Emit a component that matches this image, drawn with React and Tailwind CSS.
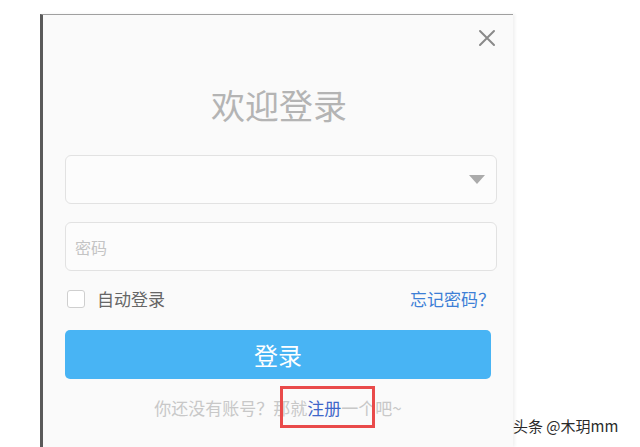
const font = { fontFamily: '"Noto Sans CJK SC", "Noto Sans", sans-serif' };

function CloseIcon() {
	return (
		<svg width="18" height="18" viewBox="0 0 18 18" fill="none" stroke="#8a8a8a" strokeWidth="2" strokeLinecap="round">
			<path d="M2 2 L16 16 M16 2 L2 16" />
		</svg>
	);
}

// full-width question mark, kept at a full em like the reference
function Q() {
	return <span className="inline-block w-[1em] text-center">？</span>;
}

export default function App() {
	return (
		<div className="relative h-[447px] w-[640px] overflow-hidden bg-white" style={font}>
			<div className="ml-[40px] mt-[14px] flex h-[433px] w-[473px] flex-col border-t border-l-[3px] border-t-[#a0a0a0] border-l-[#5a5a5a] bg-[#fafafa] shadow-[2px_0_3px_rgba(0,0,0,0.06)]">
				<div className="flex justify-end pt-[14px] pr-[17px]">
					<button className="h-[18px] w-[18px]">
						<CloseIcon />
					</button>
				</div>

				<div className="pl-[22px] pr-[16px]">
					<h1 className="mt-[38px] text-center text-[34px] leading-[40px] text-[#b4b4b4] pr-[4px]">欢迎登录</h1>

					<div className="mt-[30px] flex h-[49px] items-center justify-end rounded-[6px] border border-[#e2e2e2] bg-[#fcfcfc] pr-[11px]">
						<svg width="16" height="9" viewBox="0 0 16 9">
							<path d="M0 0 H16 L8 9 Z" fill="#ababab" />
						</svg>
					</div>

					<div className="mt-[18px] flex h-[49px] items-center rounded-[6px] border border-[#e2e2e2] bg-[#fcfcfc] pl-[9px]">
						<span className="text-[16px] text-[#c4c4c4]">密码</span>
					</div>

					<div className="mt-[16px] flex h-[24px] items-center justify-between pl-[2px] pr-[2px]">
						<label className="flex items-center gap-[12px] text-[17px] text-[#666]">
							<span className="h-[18px] w-[18px] rounded-[3px] border border-[#cfcfcf] bg-white" />
							自动登录
						</label>
						<a className="text-[17px] text-[#3d7fd6]">
							忘记密码
							<Q />
						</a>
					</div>

					<button className="mt-[19px] flex h-[49px] w-[426px] items-center justify-center rounded-[5px] bg-[#48b4f4] text-[24px] text-white">
						登录
					</button>

					<p className="mt-[17px] pr-[6px] text-center text-[17px] leading-[24px] text-[#c8c8c8]">
						你还没有账号
						<Q />
						那就
						<span className="relative text-[#3f67c9]">
							注册
							<span className="absolute left-[-27px] top-[-9px] h-[42px] w-[95px] border-[3px] border-[#e94a4a]" />
						</span>
						一个吧~
					</p>
				</div>
			</div>

			<span className="absolute left-[513px] top-[415px] text-[15px] text-[#2a2a2a]">头条 @木玥mm</span>
		</div>
	);
}
